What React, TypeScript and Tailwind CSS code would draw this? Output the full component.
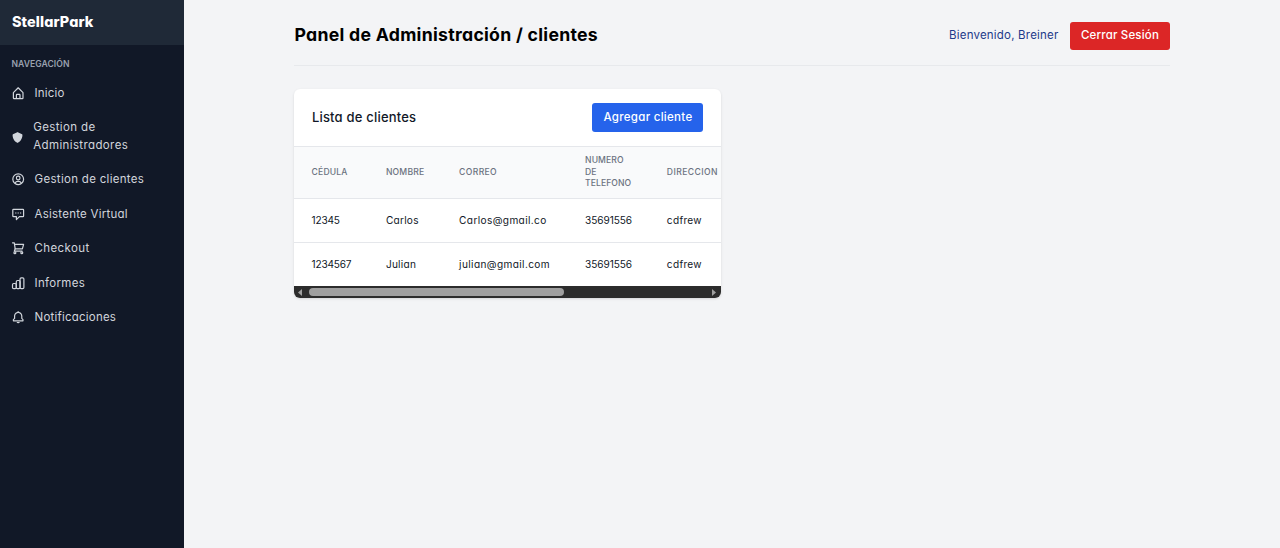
import type { ReactNode } from "react";
import { BiBell, BiHomeAlt, BiSolidShield, BiUserCircle } from "react-icons/bi";

function MessageIcon() {
  return (
    <svg viewBox="0 0 24 24" className="size-[14.4px]" fill="none" stroke="currentColor" strokeWidth="2" strokeLinejoin="round">
      <path d="M4 4h16a1 1 0 0 1 1 1v10a1 1 0 0 1-1 1h-6l-5 5v-5H4a1 1 0 0 1-1-1V5a1 1 0 0 1 1-1z" />
      <path d="M7 9h2v2H7zM11 9h2v2h-2zM15 9h2v2h-2z" fill="currentColor" stroke="none" />
    </svg>
  );
}

function CartIcon() {
  return (
    <svg viewBox="0 0 24 24" className="size-[14.4px]" fill="none" stroke="currentColor" strokeWidth="2" strokeLinecap="round" strokeLinejoin="round">
      <path d="M2.5 3h3l1.5 10-1.5 4h13" />
      <path d="M6 5.5h15L19 13H7" />
      <circle cx="6.5" cy="19.5" r="1.6" />
      <circle cx="18" cy="19.5" r="1.6" />
    </svg>
  );
}

function BarsIcon() {
  return (
    <svg viewBox="0 0 24 24" className="size-[14.4px]" fill="none" stroke="currentColor" strokeWidth="2" strokeLinejoin="round">
      <rect x="2.5" y="12.5" width="6.3" height="8.5" rx="2" />
      <rect x="8.8" y="7.5" width="6.3" height="13.5" rx="2" />
      <rect x="15.1" y="3" width="6.4" height="18" rx="2" />
    </svg>
  );
}

type NavEntry = { label: string; icon: ReactNode; tracking: string };

const iconClass = "size-[14.4px]";

const entriesBelow: NavEntry[] = [
  { label: "Gestion de clientes", icon: <BiUserCircle className={iconClass} />, tracking: "tracking-[0.3px]" },
  { label: "Asistente Virtual", icon: <MessageIcon />, tracking: "tracking-[0.23px]" },
  { label: "Checkout", icon: <CartIcon />, tracking: "tracking-[0.38px]" },
  { label: "Informes", icon: <BarsIcon />, tracking: "tracking-[0.31px]" },
  { label: "Notificaciones", icon: <BiBell className={iconClass} />, tracking: "tracking-[0.21px]" },
];

function NavItem({ label, icon, tracking }: NavEntry) {
  return (
    <a className="flex h-[34.5px] items-center gap-[9px] pl-[11.2px]">
      <span className="shrink-0">{icon}</span>
      <span className={tracking}>{label}</span>
    </a>
  );
}

function Sidebar() {
  return (
    <aside className="w-[184px] shrink-0 bg-[#111827] text-[11.5px] text-gray-300">
      <div className="flex h-[45px] items-center bg-[#1f2937] pb-[2px] pl-[12px] text-[14.4px] font-extrabold tracking-[0.1px] text-white">
        StellarPark
      </div>
      <p className="mt-[12px] mb-[4.4px] pl-[11.5px] text-[8.6px] leading-[15px] font-semibold tracking-[0.05px] text-gray-400">
        NAVEGACIÓN
      </p>
      <nav>
        <NavItem label="Inicio" icon={<BiHomeAlt className={iconClass} />} tracking="tracking-[0.18px]" />
        <a className="flex h-[51.5px] items-center gap-[9px] pl-[11.2px]">
          <BiSolidShield className="mt-[1px] size-[13px] shrink-0" />
          <span className="w-[110px] leading-[17.3px] tracking-[0.38px]">Gestion de Administradores</span>
        </a>
        {entriesBelow.map((entry) => (
          <NavItem key={entry.label} {...entry} />
        ))}
      </nav>
    </aside>
  );
}

const clients = [
  { id: "12345", name: "Carlos", email: "Carlos@gmail.co", phone: "35691556", address: "cdfrew" },
  { id: "1234567", name: "Julian", email: "julian@gmail.com", phone: "35691556", address: "cdfrew" },
];

const columns = "grid grid-cols-[74.3px_73.2px_126px_81.8px_54px] items-center pl-[17.2px]";

function ClientTable() {
  return (
    <section className="w-[426.6px] overflow-hidden rounded-[6px] bg-white shadow-sm">
      <div className="flex h-[57px] items-center justify-between px-[17.5px]">
        <h2 className="text-[13px] font-medium tracking-[0.2px] text-[#111827]">Lista de clientes</h2>
        <button className="h-[29px] w-[111px] rounded-[3px] bg-[#2563eb] text-[11.5px] font-medium tracking-[0.29px] text-white">
          Agregar cliente
        </button>
      </div>
      <div className={`${columns} h-[52px] border-t border-gray-200 bg-[#f9fafb] text-[8.6px] leading-[11.6px] font-medium text-[#6b7280]`}>
        <span className="tracking-[0.17px]">CÉDULA</span>
        <span className="tracking-[0.2px]">NOMBRE</span>
        <span className="tracking-[0.37px]">CORREO</span>
        <span className="w-[48px] tracking-[0.08px]">NUMERO DE TELEFONO</span>
        <span className="tracking-[0.4px]">DIRECCION</span>
      </div>
      {clients.map((client) => (
        <div key={client.id} className={`${columns} h-[44px] border-t border-gray-200 text-[10.1px] text-[#111827]`}>
          <span className="tracking-[-0.2px]">{client.id}</span>
          <span className="tracking-[0.25px]">{client.name}</span>
          <span className="tracking-[0.38px]">{client.email}</span>
          <span className="tracking-[-0.07px]">{client.phone}</span>
          <span className="tracking-[0.29px]">{client.address}</span>
        </div>
      ))}
      <div className="flex h-[12px] items-center justify-between bg-[#2c2c2c] px-[4px] text-[#9f9f9f]">
        <svg viewBox="0 0 4 7" className="h-[7px] w-[4px]" fill="currentColor">
          <path d="M4 0v7L0 3.5z" />
        </svg>
        <div className="mr-auto ml-[6.5px] h-[7.5px] w-[255px] rounded-full bg-[#9f9f9f]" />
        <svg viewBox="0 0 4 7" className="mr-[1px] h-[7px] w-[4px]" fill="currentColor">
          <path d="M0 0v7l4-3.5z" />
        </svg>
      </div>
    </section>
  );
}

export default function App() {
  return (
    <div className="flex h-[548px] bg-[#f3f4f6] font-['Inter',sans-serif] [font-feature-settings:'cv11']">
      <Sidebar />
      <main className="flex-1 pr-[110px] pl-[110.4px]">
        <header className="mb-[23px] flex h-[66px] items-center justify-between border-b border-[#e7e9ec] pt-[7px]">
          <h1 className="pb-[1px] text-[17.7px] font-bold tracking-[0.27px] text-black">Panel de Administración / clientes</h1>
          <div className="flex items-center gap-[11.5px]">
            <span className="text-[11.5px] tracking-[0.2px] text-[#1e3a8a]">Bienvenido, Breiner</span>
            <button className="h-[28.6px] w-[100px] rounded-[3px] bg-[#dc2626] text-[11.5px] font-medium tracking-[0.17px] text-white">
              Cerrar Sesión
            </button>
          </div>
        </header>
        <ClientTable />
      </main>
    </div>
  );
}
